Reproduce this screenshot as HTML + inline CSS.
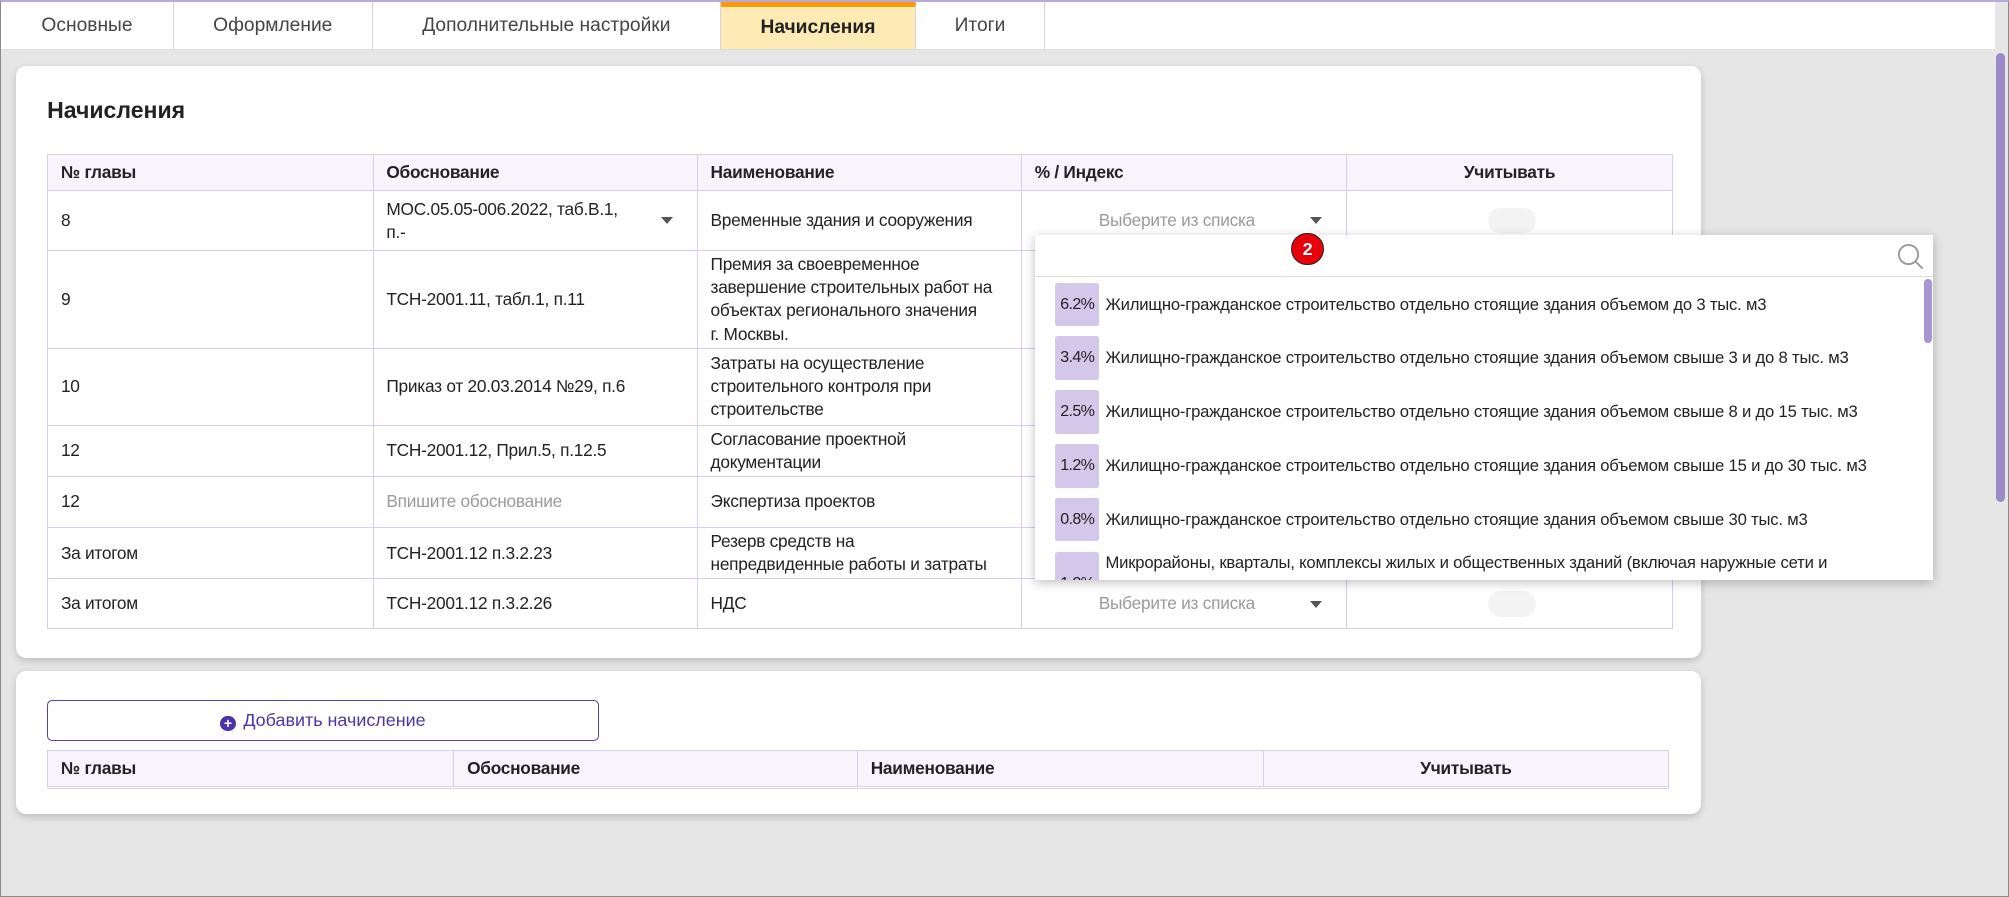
<!DOCTYPE html>
<html><head><meta charset="utf-8"><style>
html,body{margin:0;padding:0}
body{width:2009px;height:897px;overflow:hidden;background:#e6e6e6;font-family:"Liberation Sans",sans-serif;color:#222}
#r{zoom:1.28125;width:1568px;height:700px;position:relative;overflow:hidden;background:#e6e6e6;box-sizing:border-box;border:1px solid #8a8a8a;border-top:2px solid #b9a9d8}
.abs{position:absolute}
.tabs{left:0;top:0;width:1556px;height:37px;background:#fff;border-bottom:1px solid #ddd}
.tab{position:absolute;top:0;height:37px;line-height:37px;text-align:center;font-size:15px;color:#444;border-right:1px solid #d6d6d6;box-sizing:border-box}
.card{background:#fff;border-radius:8px;box-shadow:0 2px 6px rgba(0,0,0,.18)}
table{border-collapse:collapse;table-layout:fixed;font-size:13.5px;letter-spacing:-0.2px}
td,th{border:1px solid #d9cdeb;padding:0 10px;text-align:left;vertical-align:middle;line-height:18px;white-space:nowrap}
th{background:#f7f4fc;font-weight:bold;height:27px}
.ph{color:#9a9a9a}
.tg{position:absolute;width:37px;height:20px;border-radius:10px;background:#f3f3f3;left:110px;top:50%;margin-top:-10px}
.dd{left:807px;top:182px;width:701px;height:269px;background:#fff;box-shadow:0 2px 8px rgba(0,0,0,.25)}
.it{position:absolute;left:16px;height:34px;font-size:13px;letter-spacing:-0.15px;line-height:34px;white-space:nowrap}
.bd{display:inline-block;width:34px;height:34px;background:#d3c7ea;border-radius:2px;text-align:center;font-size:12.5px;margin-right:5px;vertical-align:top;letter-spacing:-0.5px}
.arr{position:absolute;width:0;height:0;border-left:5px solid transparent;border-right:5px solid transparent;border-top:6px solid #555}
</style></head><body><div id="r">
<div class="abs tabs">
<div class="tab" style="left:0;width:135px">Основные</div>
<div class="tab" style="left:135px;width:155px">Оформление</div>
<div class="tab" style="left:290px;width:272px">Дополнительные настройки</div>
<div class="tab" style="left:562px;width:152px;background:#fdeab4;border-top:4px solid #f99a0b;line-height:33px;font-weight:bold;color:#222">Начисления</div>
<div class="tab" style="left:714px;width:101px">Итоги</div>
</div>
<div class="abs" style="left:1557px;top:40px;width:7px;height:350px;background:#9d8ac8;border-radius:4px"></div>

<div class="abs card" style="left:12px;top:50px;width:1315px;height:462px">
<div class="abs" style="left:24px;top:24px;font-size:18px;font-weight:bold">Начисления</div>
<table class="abs" style="left:24px;top:69px;width:1268px">
<colgroup><col style="width:254px"><col style="width:253px"><col style="width:253px"><col style="width:254px"><col style="width:254px"></colgroup>
<tr><th>№ главы</th><th>Обоснование</th><th>Наименование</th><th>% / Индекс</th><th style="text-align:center">Учитывать</th></tr>
<tr style="height:47px"><td>8</td><td style="position:relative">МОС.05.05-006.2022, таб.В.1,<br>п.-<div class="arr" style="left:224px;top:20px"></div></td><td>Временные здания и сооружения</td><td style="position:relative"><span class="ph" style="margin-left:50px">Выберите из списка</span><div class="arr" style="left:225px;top:20px"></div></td><td style="position:relative"><div class="tg"></div></td></tr>
<tr style="height:76px"><td>9</td><td>ТСН-2001.11, табл.1, п.11</td><td>Премия за своевременное<br>завершение строительных работ на<br>объектах регионального значения<br>г. Москвы.</td><td></td><td></td></tr>
<tr style="height:60px"><td>10</td><td>Приказ от 20.03.2014 №29, п.6</td><td>Затраты на осуществление<br>строительного контроля при<br>строительстве</td><td></td><td></td></tr>
<tr style="height:40px"><td>12</td><td>ТСН-2001.12, Прил.5, п.12.5</td><td>Согласование проектной<br>документации</td><td></td><td></td></tr>
<tr style="height:40px"><td>12</td><td class="ph">Впишите обоснование</td><td>Экспертиза проектов</td><td></td><td></td></tr>
<tr style="height:40px"><td>За итогом</td><td>ТСН-2001.12 п.3.2.23</td><td>Резерв средств на<br>непредвиденные работы и затраты</td><td></td><td></td></tr>
<tr style="height:39px"><td>За итогом</td><td>ТСН-2001.12 п.3.2.26</td><td>НДС</td><td style="position:relative"><span class="ph" style="margin-left:50px">Выберите из списка</span><div class="arr" style="left:225px;top:17px"></div></td><td style="position:relative"><div class="tg"></div></td></tr>
</table>
</div>

<div class="abs card" style="left:12px;top:522px;width:1315px;height:112px">
<div class="abs" style="left:24px;top:23px;width:429px;height:30px;border:1px solid #5b3db0;border-radius:4px;text-align:center;line-height:30px;font-size:14px;color:#4d32a8">
<span style="display:inline-block;width:12px;height:12px;border-radius:50%;background:#4d32a8;color:#fff;font-size:11px;line-height:12px;font-weight:bold;vertical-align:-1px;margin-right:6px">+</span>Добавить начисление</div>
<table class="abs" style="left:24px;top:62px;width:1265px;border-bottom:3px double #d9cdeb">
<colgroup><col style="width:317px"><col style="width:315px"><col style="width:317px"><col style="width:316px"></colgroup>
<tr><th style="height:22px">№ главы</th><th>Обоснование</th><th>Наименование</th><th style="text-align:center">Учитывать</th></tr>
</table>
</div>

<div class="abs dd">
<div class="abs" style="left:0;top:32px;width:701px;border-top:1px solid #ddd"></div>
<svg class="abs" style="left:673px;top:6px" width="22" height="22" viewBox="0 0 22 22"><circle cx="9" cy="9" r="7.5" fill="none" stroke="#999" stroke-width="1.5"/><line x1="14.5" y1="14.5" x2="20" y2="20" stroke="#999" stroke-width="1.5"/></svg>
<div class="abs" style="left:694px;top:34px;width:6px;height:50px;background:#a796cf;border-radius:3px"></div>
<div class="it" style="top:37px"><span class="bd">6.2%</span>Жилищно-гражданское строительство отдельно стоящие здания объемом до 3 тыс. м3</div>
<div class="it" style="top:79px"><span class="bd">3.4%</span>Жилищно-гражданское строительство отдельно стоящие здания объемом свыше 3 и до 8 тыс. м3</div>
<div class="it" style="top:121px"><span class="bd">2.5%</span>Жилищно-гражданское строительство отдельно стоящие здания объемом свыше 8 и до 15 тыс. м3</div>
<div class="it" style="top:163px"><span class="bd">1.2%</span>Жилищно-гражданское строительство отдельно стоящие здания объемом свыше 15 и до 30 тыс. м3</div>
<div class="it" style="top:205px"><span class="bd">0.8%</span>Жилищно-гражданское строительство отдельно стоящие здания объемом свыше 30 тыс. м3</div>
<div class="abs" style="left:16px;top:247px;width:680px;height:22px;overflow:hidden;font-size:13px;letter-spacing:-0.15px;white-space:nowrap"><span class="bd" style="line-height:50px">1.2%</span><span style="position:relative;top:-8px;line-height:34px">Микрорайоны, кварталы, комплексы жилых и общественных зданий (включая наружные сети и</span></div>
</div>
<div class="abs" style="left:1007px;top:180px;width:24px;height:24px;border-radius:50%;background:#e8000b;border:1px solid #222;color:#fff;font-weight:bold;font-size:14px;text-align:center;line-height:24px">2</div>
</div></body></html>
